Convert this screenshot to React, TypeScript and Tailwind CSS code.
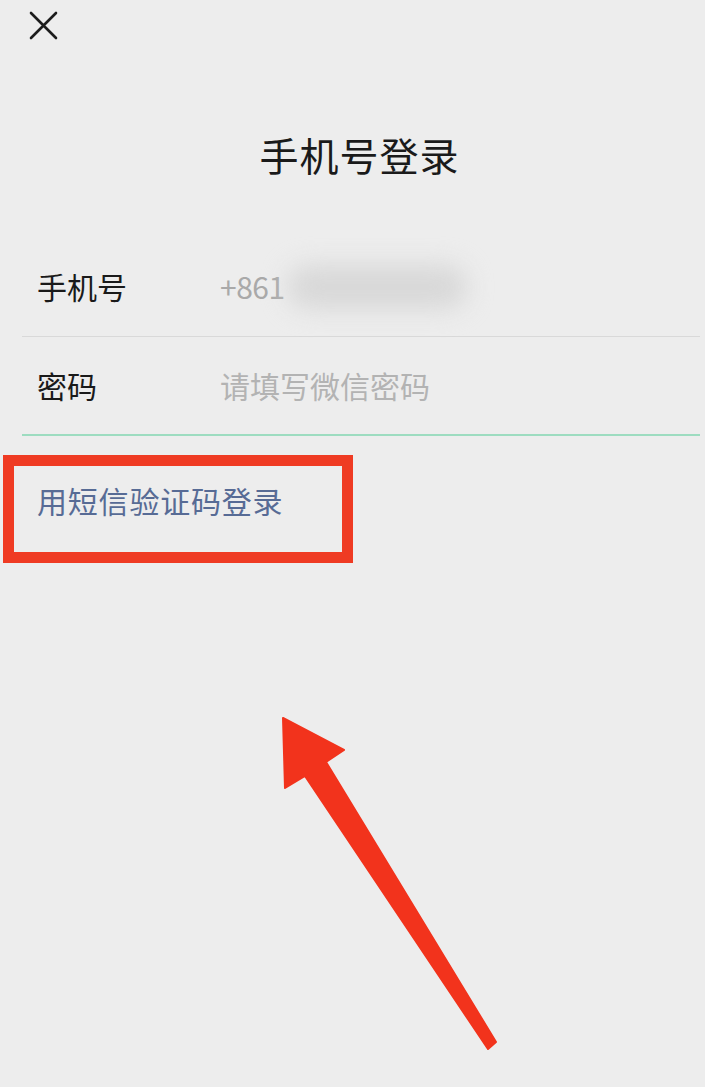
import React from 'react';

const CloseIcon = () => (
  <svg width="32" height="32" viewBox="0 0 32 32" fill="none">
    <path d="M4 3 L29 28 M29 3 L4 28" stroke="#1c1c1c" strokeWidth="2.6" strokeLinecap="round" />
  </svg>
);

// hand-drawn style pointer used as an annotation over the page
const PointerArrow = () => (
  <svg className="absolute left-0 top-0 pointer-events-none" width="705" height="1087" viewBox="0 0 705 1087">
    <polygon
      points="283,718 344,750 326,762 496,1042 488,1049 305,776 285,788"
      fill="#f2331c"
      stroke="#f2331c"
      strokeWidth="2"
      strokeLinejoin="round"
    />
  </svg>
);

export default function App() {
  return (
    <div
      className="relative w-[705px] h-[1087px] overflow-hidden bg-[#ededed] text-[#1a1a1a]"
      style={{ fontFamily: '"Noto Sans CJK SC", "Noto Sans", sans-serif' }}
    >
      <div className="h-[52px] pl-[27px] pt-[10px]">
        <CloseIcon />
      </div>

      <h1 className="mt-[79px] pl-[14px] text-center text-[39px] leading-[47px] font-normal tracking-[1px]">手机号登录</h1>

      <div className="mt-[59px] mx-[22px] mr-[5px]">
        <div className="flex items-center h-[100px] border-b border-[#d9d9d9]">
          <span className="w-[198px] pl-[15px] text-[30px]">手机号</span>
          <span className="text-[30px] text-[#a9a9a9] tracking-[-0.5px]">+861</span>
          <span className="ml-[2px] w-[180px] h-[44px] rounded-full bg-[#d8d8d8] blur-md" />
        </div>
        <div className="flex items-center h-[99px] border-b-2 border-[#9ddcc0]">
          <span className="w-[198px] pl-[15px] text-[30px]">密码</span>
          <span className="text-[30px] text-[#b3b3b3]">请填写微信密码</span>
        </div>
      </div>

      <div className="mt-[19px] ml-[3px] w-[350px] h-[108px] border-[11px] border-[#ef3b23] pl-[23px] pt-[13px]">
        <span className="text-[30px] leading-[42px] tracking-[0.8px] text-[#576b95]">用短信验证码登录</span>
      </div>

      <PointerArrow />
    </div>
  );
}
